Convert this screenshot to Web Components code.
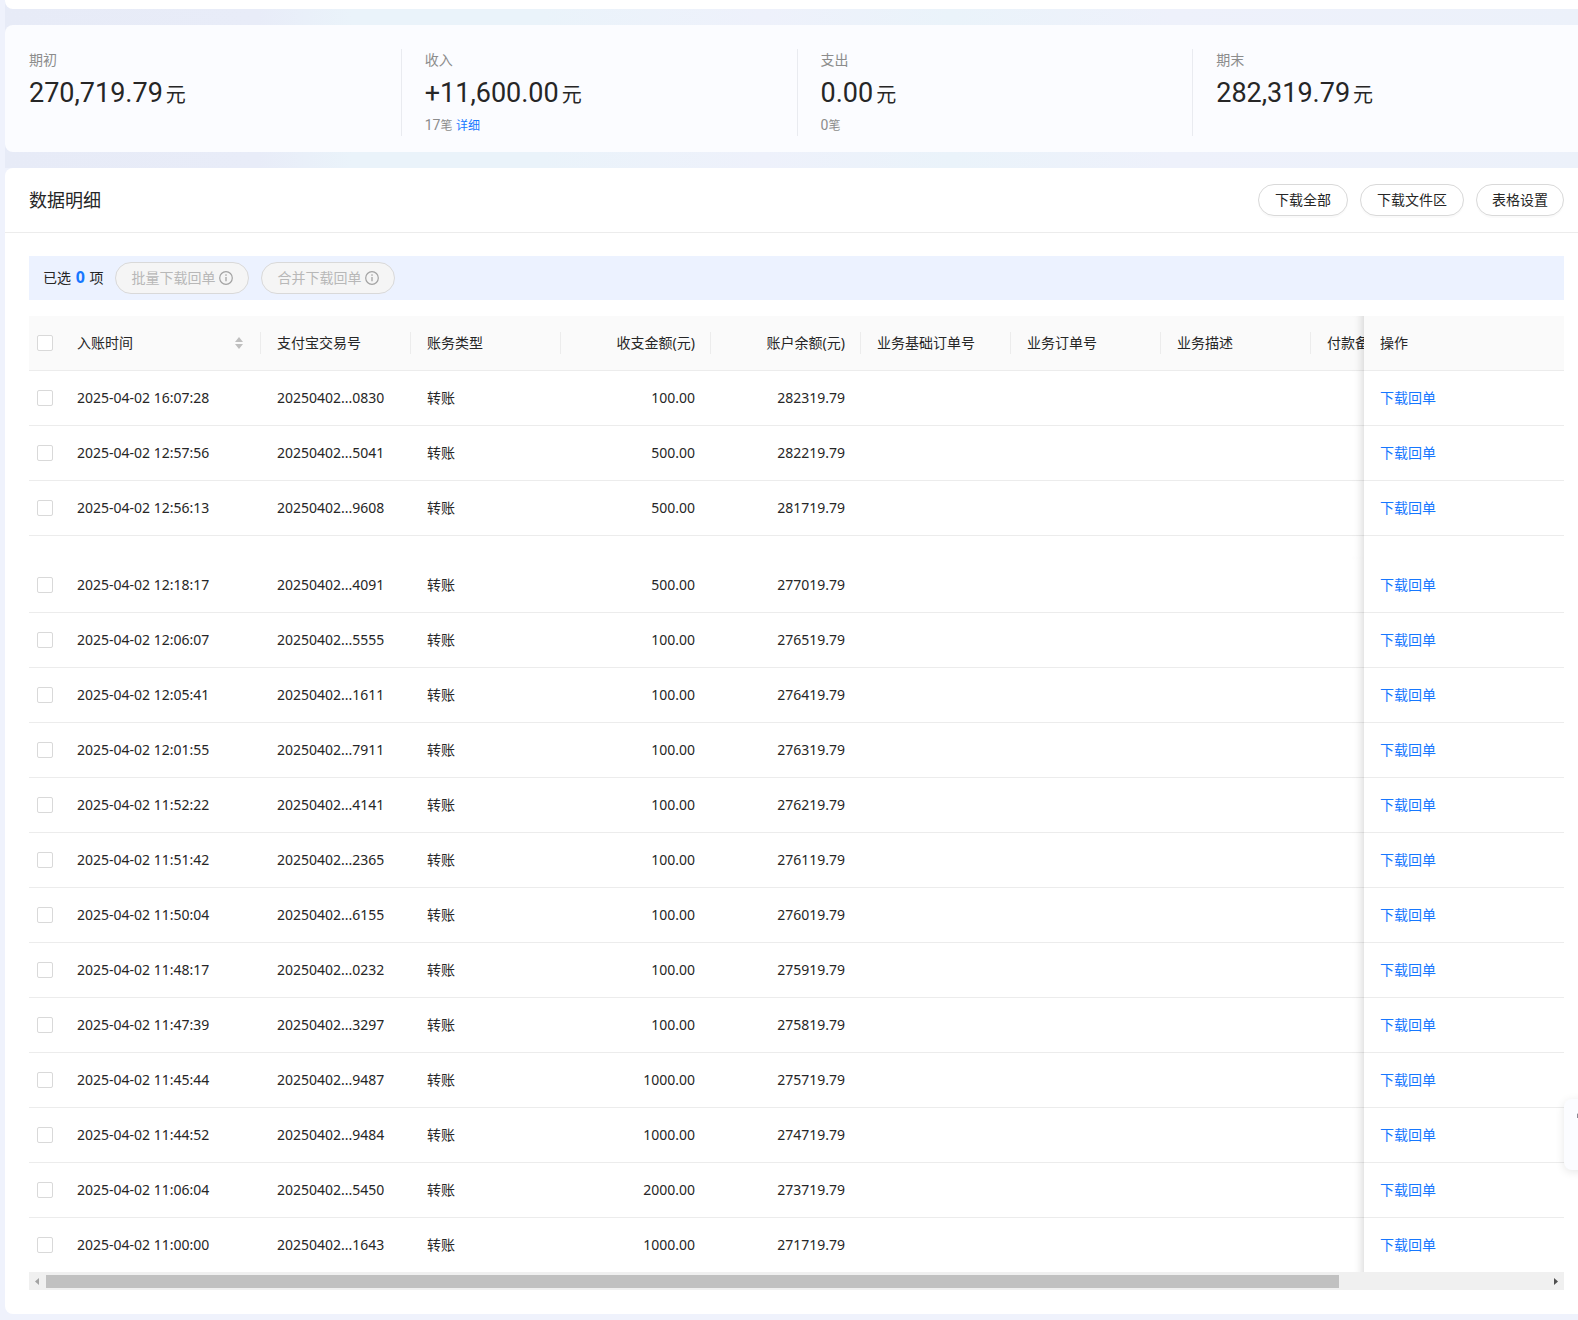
<!DOCTYPE html>
<html lang="zh-CN">
<head>
<meta charset="utf-8">
<title>数据明细</title>
<style>
  html {
    --text: #262626;
    --text-dim: #8c8c8c;
    --link: #1677ff;
    --line: #ececec;
    --line-control: #d9d9d9;
    --font: "Noto Sans", "Noto Sans CJK SC", sans-serif;
    --font-number: Roboto, "Noto Sans CJK SC", sans-serif;
  }
  body {
    margin: 0;
    overflow-x: hidden;
    min-height: 100vh;
    color: var(--text);
    font: 14px/22px var(--font);
    background:
      linear-gradient(90deg, #e7ebf7 0, #e8ecf8 16%, #eaf3fa 22%, #eaf3fa 34%, #eef1fb 48%, #eaf3fa 60%, #eef1fb 74%, #ecf1fa 100%) 5px 0 / 100% 168px no-repeat,
      #eff2fc;
  }
</style>
</head>
<body>
<bill-page>
  <bill-summary>
    <bill-stat label="期初" value="270,719.79"></bill-stat>
    <bill-stat label="收入" value="+11,600.00" count="17"><a href="#detail">详细</a></bill-stat>
    <bill-stat label="支出" value="0.00" count="0"></bill-stat>
    <bill-stat label="期末" value="282,319.79"></bill-stat>
  </bill-summary>
  <bill-panel>
    <span slot="title">数据明细</span>
    <pill-button slot="actions">下载全部</pill-button>
    <pill-button slot="actions">下载文件区</pill-button>
    <pill-button slot="actions" compact>表格设置</pill-button>
    <selection-bar count="0">
      <pill-button disabled info>批量下载回单</pill-button>
      <pill-button disabled info>合并下载回单</pill-button>
    </selection-bar>
    <bill-table></bill-table>
  </bill-panel>
</bill-page>
<side-widget></side-widget>

<script>
// page column; the cards run a little past the right edge of the window
class BillPage extends HTMLElement {
  connectedCallback() {
    this.attachShadow({ mode: "open" });
    this.shadowRoot.innerHTML = `
      <style>
        :host {
          display: flex;
          flex-direction: column;
          gap: 16px;
          margin-left: 5px;
          margin-right: -10px;
          padding-bottom: 6px;
        }
        .filters {
          height: 9px;
          background: #fff;
          border-radius: 0 0 8px 8px;
        }
      </style>
      <div class="filters"></div>
      <slot></slot>
    `;
  }
}

class BillSummary extends HTMLElement {
  connectedCallback() {
    this.attachShadow({ mode: "open" });
    this.shadowRoot.innerHTML = `
      <style>
        :host {
          display: flex;
          padding: 24px 0 16px;
          background: #fbfcff;
          border-radius: 8px;
        }
        ::slotted(*) {
          flex: 1 1 0;
        }
        ::slotted(:not(:last-child)) {
          box-shadow: 1px 0 #e9ebf0;
        }
      </style>
      <slot></slot>
    `;
  }
}

class BillStat extends HTMLElement {
  connectedCallback() {
    const count = this.getAttribute("count");
    this.attachShadow({ mode: "open" });
    this.shadowRoot.innerHTML = `
      <style>
        :host {
          display: block;
          box-sizing: border-box;
          min-height: 87px;
          padding-left: 24px;
        }
        .label {
          color: var(--text-dim);
          line-height: 22px;
        }
        .value {
          font: 27px/44px var(--font-number);
          white-space: nowrap;
        }
        .value small {
          font-size: 20px;
          line-height: 1;
          margin-left: 3px;
        }
        .extra {
          color: var(--text-dim);
          font: 14px/20px var(--font-number);
        }
        .extra small {
          font-size: 12px;
          line-height: 1;
        }
        ::slotted(a) {
          color: var(--link);
          font-size: 12px;
          line-height: 1;
          text-decoration: none;
        }
      </style>
      <div class="label">${this.getAttribute("label")}</div>
      <div class="value">${this.getAttribute("value")}<small>元</small></div>
      ${count === null ? "" : `<div class="extra">${count}<small>笔</small> <slot></slot></div>`}
    `;
  }
}

class BillPanel extends HTMLElement {
  connectedCallback() {
    this.attachShadow({ mode: "open" });
    this.shadowRoot.innerHTML = `
      <style>
        :host {
          display: block;
          background: #fff;
          border-radius: 8px;
        }
        header {
          display: flex;
          align-items: center;
          gap: 12px;
          padding: 16px 24px;
          border-bottom: 1px solid var(--line);
        }
        h2 {
          flex: 1;
          margin: 0;
          font-size: 18px;
          font-weight: 400;
          line-height: 32px;
        }
        .body {
          display: flex;
          flex-direction: column;
          gap: 16px;
          padding: 23px 24px 24px;
        }
      </style>
      <header>
        <h2><slot name="title"></slot></h2>
        <slot name="actions"></slot>
      </header>
      <div class="body"><slot></slot></div>
    `;
  }
}

class PillButton extends HTMLElement {
  connectedCallback() {
    const info = `
      <svg width="14" height="14" viewBox="0 0 14 14" fill="none" stroke="#a3a3a3" stroke-width="1.2">
        <circle cx="7" cy="7" r="6.3"/>
        <path d="M7 6v4.2" stroke-width="1.3"/>
        <circle cx="7" cy="4.1" r=".8" fill="#a3a3a3" stroke="none"/>
      </svg>`;
    this.attachShadow({ mode: "open" });
    this.shadowRoot.innerHTML = `
      <style>
        :host {
          display: block;
        }
        button {
          display: flex;
          align-items: center;
          gap: 4px;
          height: 32px;
          padding: 0 16px;
          border: 1px solid var(--line-control);
          border-radius: 16px;
          background: #fff;
          box-shadow: 0 2px 0 rgba(0, 0, 0, .02);
          color: var(--text);
          font: inherit;
          white-space: nowrap;
        }
        :host([compact]) button,
        button:disabled {
          padding: 0 15px;
        }
        button:disabled {
          background: #f5f5f5;
          box-shadow: none;
          color: #b8b8b8;
        }
      </style>
      <button type="button" ${this.hasAttribute("disabled") ? "disabled" : ""}>
        <slot></slot>${this.hasAttribute("info") ? info : ""}
      </button>
    `;
  }
}

class SelectionBar extends HTMLElement {
  connectedCallback() {
    this.attachShadow({ mode: "open" });
    this.shadowRoot.innerHTML = `
      <style>
        :host {
          display: flex;
          align-items: center;
          gap: 12px;
          height: 44px;
          padding: 0 14px;
          background: #ecf2ff;
        }
        b {
          color: var(--link);
          font-size: 16px;
          line-height: 1;
          margin: 0 1px;
        }
      </style>
      <span>已选 <b>${this.getAttribute("count")}</b> 项</span>
      <slot></slot>
    `;
  }
}

const ROWS = [
  ["2025-04-02 16:07:28", "20250402...0830", "100.00", "282319.79"],
  ["2025-04-02 12:57:56", "20250402...5041", "500.00", "282219.79"],
  ["2025-04-02 12:56:13", "20250402...9608", "500.00", "281719.79"],
  null,
  ["2025-04-02 12:18:17", "20250402...4091", "500.00", "277019.79"],
  ["2025-04-02 12:06:07", "20250402...5555", "100.00", "276519.79"],
  ["2025-04-02 12:05:41", "20250402...1611", "100.00", "276419.79"],
  ["2025-04-02 12:01:55", "20250402...7911", "100.00", "276319.79"],
  ["2025-04-02 11:52:22", "20250402...4141", "100.00", "276219.79"],
  ["2025-04-02 11:51:42", "20250402...2365", "100.00", "276119.79"],
  ["2025-04-02 11:50:04", "20250402...6155", "100.00", "276019.79"],
  ["2025-04-02 11:48:17", "20250402...0232", "100.00", "275919.79"],
  ["2025-04-02 11:47:39", "20250402...3297", "100.00", "275819.79"],
  ["2025-04-02 11:45:44", "20250402...9487", "1000.00", "275719.79"],
  ["2025-04-02 11:44:52", "20250402...9484", "1000.00", "274719.79"],
  ["2025-04-02 11:06:04", "20250402...5450", "2000.00", "273719.79"],
  ["2025-04-02 11:00:00", "20250402...1643", "1000.00", "271719.79"],
];

class BillTable extends HTMLElement {
  row(data) {
    // null is the gap between two groups of rows
    if (!data) {
      return `<tr class="gap"><td colspan="11"></td><td class="fixed"></td></tr>`;
    }
    const [time, no, amount, balance] = data;
    return `
      <tr>
        <td class="check"><input type="checkbox" aria-label="${time}"></td>
        <td>${time}</td>
        <td>${no}</td>
        <td>转账</td>
        <td class="num">${amount}</td>
        <td class="num">${balance}</td>
        <td></td><td></td><td></td><td></td><td></td>
        <td class="fixed"><a href="#receipt">下载回单</a></td>
      </tr>`;
  }

  connectedCallback() {
    this.attachShadow({ mode: "open" });
    this.shadowRoot.innerHTML = `
      <style>
        :host {
          display: block;
        }
        .scroll {
          overflow: hidden;
        }
        table {
          width: 1782px;
          min-width: 100%;
          table-layout: fixed;
          border-collapse: separate;
          border-spacing: 0;
        }
        .c-check { width: 32px; }
        .c-wide { width: 200px; }
        .c-data { width: 150px; }
        th, td {
          box-sizing: border-box;
          height: 55px;
          padding: 0 16px;
          border-bottom: 1px solid var(--line);
          background: #fff;
          font-weight: 400;
          text-align: left;
          white-space: nowrap;
        }
        th {
          background: #fafafa linear-gradient(var(--line), var(--line)) right center / 1px 22px no-repeat;
        }
        th.check, th.fixed {
          background-image: none;
        }
        .check {
          padding: 0 8px;
        }
        .num {
          text-align: right;
        }
        .gap td {
          height: 22px;
          border-bottom: 0;
        }
        tbody tr:last-child td {
          height: 54px;
          border-bottom: 0;
        }
        .sort {
          display: flex;
          align-items: center;
          justify-content: space-between;
        }
        input {
          display: block;
          appearance: none;
          width: 16px;
          height: 16px;
          margin: 0;
          border: 1px solid var(--line-control);
          border-radius: 2px;
          background: #fff;
        }
        .fixed {
          position: sticky;
          right: 0;
        }
        /* shadow the pinned column throws on the columns under it */
        .fixed::before {
          content: "";
          position: absolute;
          top: 0;
          bottom: -1px;
          right: 100%;
          width: 30px;
          box-shadow: inset -10px 0 8px -8px rgba(0, 0, 0, .15);
          pointer-events: none;
        }
        .gap .fixed::before {
          bottom: 0;
        }
        a {
          color: var(--link);
          text-decoration: none;
        }
        .bar {
          display: flex;
          align-items: center;
          height: 18px;
          background: #f0f0f0;
        }
        .bar svg {
          flex: none;
        }
        .thumb {
          flex: 1293;
          height: 13px;
          background: #c1c1c1;
        }
        .rest {
          flex: 208;
        }
      </style>
      <div class="scroll">
        <table>
          <colgroup>
            <col class="c-check"><col class="c-wide">
            ${`<col class="c-data">`.repeat(9)}
            <col class="c-wide">
          </colgroup>
          <thead>
            <tr>
              <th class="check"><input type="checkbox" aria-label="全选"></th>
              <th>
                <div class="sort">入账时间
                  <svg width="10" height="12" viewBox="0 0 10 12" fill="#bfbfbf">
                    <path d="M4 0l4 5H0zM4 12L0 7h8z"/>
                  </svg>
                </div>
              </th>
              <th>支付宝交易号</th>
              <th>账务类型</th>
              <th class="num">收支金额(元)</th>
              <th class="num">账户余额(元)</th>
              <th>业务基础订单号</th>
              <th>业务订单号</th>
              <th>业务描述</th>
              <th>付款备注</th>
              <th></th>
              <th class="fixed">操作</th>
            </tr>
          </thead>
          <tbody>${ROWS.map((data) => this.row(data)).join("")}</tbody>
        </table>
      </div>
      <div class="bar">
        <svg width="17" height="18" viewBox="0 0 17 18"><path d="M10 6v7L6 9.500z" fill="#a3a3a3"/></svg>
        <div class="thumb"></div>
        <div class="rest"></div>
        <svg width="17" height="18" viewBox="0 0 17 18"><path d="M7 6v7l4-3.500z" fill="#505050"/></svg>
      </div>
    `;
  }
}

// help tab docked to the window edge, mostly tucked away
class SideWidget extends HTMLElement {
  connectedCallback() {
    this.attachShadow({ mode: "open" });
    this.shadowRoot.innerHTML = `
      <style>
        :host {
          position: fixed;
          right: 0;
          bottom: 134px;
          width: 30px;
          height: 102px;
          overflow: hidden;
          pointer-events: none;
        }
        button {
          display: flex;
          align-items: flex-start;
          width: 56px;
          height: 71px;
          margin: 15px 0 0 16px;
          padding: 12px 0 0 13px;
          border: 0;
          border-radius: 8px;
          background: #fbfcff;
          box-shadow: 0 2px 10px rgba(0, 0, 0, .1);
          pointer-events: auto;
        }
        svg {
          flex: none;
        }
      </style>
      <button type="button" aria-label="客服">
        <svg width="24" height="24" viewBox="0 0 24 24" fill="none" stroke="#8a8a94" stroke-width="2">
          <path d="M1 7V3.500L4 1h16l3 3v12l-3 3H9"/>
        </svg>
      </button>
    `;
  }
}

customElements.define("bill-page", BillPage);
customElements.define("bill-summary", BillSummary);
customElements.define("bill-stat", BillStat);
customElements.define("bill-panel", BillPanel);
customElements.define("pill-button", PillButton);
customElements.define("selection-bar", SelectionBar);
customElements.define("bill-table", BillTable);
customElements.define("side-widget", SideWidget);
</script>
</body>
</html>
